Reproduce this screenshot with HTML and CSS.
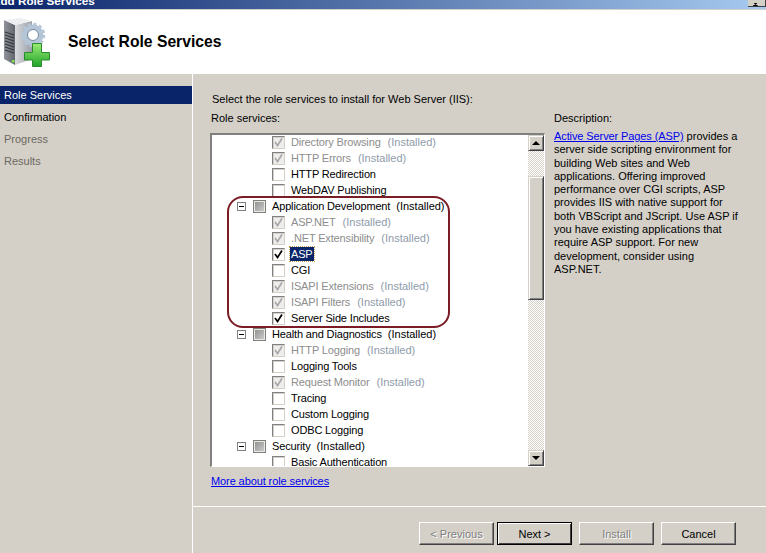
FILE: index.html
```html
<!DOCTYPE html>
<html lang="en">
<head>
<meta charset="utf-8">
<title>Add Role Services</title>
<link rel="stylesheet" href="styles.css">
</head>
<body>
<div class="titlebar">
  <span class="title-text">Add Role Services</span>
  <span class="close-btn"><svg width="11" height="9" viewBox="0 0 11 9"><path d="M1 -3L8 5M8 -3L1 5" stroke="#000" stroke-width="1.4" fill="none"/></svg></span>
</div>
<header class="banner">
  <svg class="banner-icon" width="46" height="50" viewBox="0 0 46 50">
    <defs>
      <linearGradient id="front" x1="0" y1="0" x2="1" y2="0"><stop offset="0" stop-color="#8f9399"/><stop offset="1" stop-color="#62666d"/></linearGradient>
      <linearGradient id="side" x1="0" y1="0" x2="1" y2="0"><stop offset="0" stop-color="#d9dbde"/><stop offset="1" stop-color="#9a9ea5"/></linearGradient>
      <linearGradient id="plus" x1="0" y1="0" x2="0" y2="1"><stop offset="0" stop-color="#9bec73"/><stop offset="1" stop-color="#1fa32a"/></linearGradient>
      <filter id="soft" x="-10%" y="-10%" width="120%" height="120%"><feGaussianBlur stdDeviation="0.35"/></filter>
    </defs>
    <path d="M0 3L11 8V48L0 42Z" fill="url(#front)"/>
    <path d="M11 8L28 4V42L11 48Z" fill="url(#side)"/>
    <path d="M0 3L16 1L28 4L11 8Z" fill="#eceef0"/>
    <path d="M1 15L10 18M1 18L10 21M1 21L10 24M1 24L10 27M1 27L10 30M1 30L10 33M1 33L10 36" stroke="#34373c" stroke-width="1.100"/>
    <rect x="8" y="43" width="2.500" height="2.500" fill="#7ee04e"/>
    <g filter="url(#soft)">
      <circle cx="29" cy="18" r="8" fill="none" stroke="#b4c5d8" stroke-width="5"/>
      <circle cx="29" cy="18" r="11" fill="none" stroke="#b4c5d8" stroke-width="2.500" stroke-dasharray="3.200 2.560"/>
      <circle cx="29" cy="18" r="5.500" fill="#fff" stroke="#74879c" stroke-width="1"/>
    </g>
    <path d="M28.500 26.500H37.500V35.500H45.500V43H37.500V49.500H28.500V43H20.500V35.500H28.500Z" fill="url(#plus)" stroke="#2b8a2f" stroke-width="1"/>
  </svg>
  <h1 class="banner-title">Select Role Services</h1>
</header>
<div class="content">
  <nav class="sidebar">
    <div class="step step-active">Role Services</div>
    <div class="step">Confirmation</div>
    <div class="step step-muted">Progress</div>
    <div class="step step-muted">Results</div>
  </nav>
  <main class="main">
    <div class="pane">
      <p class="intro">Select the role services to install for Web Server (IIS):</p>
      <div class="columns">
        <section class="services">
          <div class="services-label">Role services:</div>
          <div class="listbox">
            <div class="rows">
              <div class="row child off"><span class="cb cb-dis"><svg class="tick"><use href="#tk"/></svg></span><span class="name">Directory Browsing</span><span class="inst">(Installed)</span></div>
              <div class="row child off"><span class="cb cb-dis"><svg class="tick"><use href="#tk"/></svg></span><span class="name">HTTP Errors</span><span class="inst">(Installed)</span></div>
              <div class="row child"><span class="cb"></span><span class="name">HTTP Redirection</span></div>
              <div class="row child"><span class="cb"></span><span class="name">WebDAV Publishing</span></div>
              <div class="row parent"><span class="exp"></span><span class="cb cb-mixed"></span><span class="name">Application Development</span><span class="inst">(Installed)</span></div>
              <div class="row child off"><span class="cb cb-dis"><svg class="tick"><use href="#tk"/></svg></span><span class="name">ASP.NET</span><span class="inst">(Installed)</span></div>
              <div class="row child off"><span class="cb cb-dis"><svg class="tick"><use href="#tk"/></svg></span><span class="name">.NET Extensibility</span><span class="inst">(Installed)</span></div>
              <div class="row child"><span class="cb"><svg class="tick tick-on"><use href="#tk"/></svg></span><span class="name selected">ASP</span></div>
              <div class="row child"><span class="cb"></span><span class="name">CGI</span></div>
              <div class="row child off"><span class="cb cb-dis"><svg class="tick"><use href="#tk"/></svg></span><span class="name">ISAPI Extensions</span><span class="inst">(Installed)</span></div>
              <div class="row child off"><span class="cb cb-dis"><svg class="tick"><use href="#tk"/></svg></span><span class="name">ISAPI Filters</span><span class="inst">(Installed)</span></div>
              <div class="row child"><span class="cb"><svg class="tick tick-on"><use href="#tk"/></svg></span><span class="name">Server Side Includes</span></div>
              <div class="row parent"><span class="exp"></span><span class="cb cb-mixed"></span><span class="name">Health and Diagnostics</span><span class="inst">(Installed)</span></div>
              <div class="row child off"><span class="cb cb-dis"><svg class="tick"><use href="#tk"/></svg></span><span class="name">HTTP Logging</span><span class="inst">(Installed)</span></div>
              <div class="row child"><span class="cb"></span><span class="name">Logging Tools</span></div>
              <div class="row child off"><span class="cb cb-dis"><svg class="tick"><use href="#tk"/></svg></span><span class="name">Request Monitor</span><span class="inst">(Installed)</span></div>
              <div class="row child"><span class="cb"></span><span class="name">Tracing</span></div>
              <div class="row child"><span class="cb"></span><span class="name">Custom Logging</span></div>
              <div class="row child"><span class="cb"></span><span class="name">ODBC Logging</span></div>
              <div class="row parent"><span class="exp"></span><span class="cb cb-mixed"></span><span class="name">Security</span><span class="inst">(Installed)</span></div>
              <div class="row child"><span class="cb"></span><span class="name">Basic Authentication</span></div>
            </div>
            <div class="scrollbar">
              <span class="sb-btn"><i class="arrow-up"></i></span>
              <span class="sb-gap sb-gap-top"></span>
              <span class="sb-thumb"></span>
              <span class="sb-gap sb-gap-bottom"></span>
              <span class="sb-btn"><i class="arrow-down"></i></span>
            </div>
            <div class="callout"></div>
          </div>
          <a class="link more" href="#">More about role services</a>
        </section>
        <aside class="description">
          <div class="desc-label">Description:</div>
          <p class="desc-text"><a class="link tight" href="#">Active Server Pages (ASP)</a> provides a<br>server side scripting environment for<br>building Web sites and Web<br>applications. Offering improved<br>performance over CGI scripts, ASP<br>provides IIS with native support for<br>both VBScript and JScript. Use ASP if<br>you have existing applications that<br>require ASP support. For new<br>development, consider using<br>ASP.NET.</p>
        </aside>
      </div>
    </div>
    <footer class="footer">
      <button class="btn btn-dis" type="button">&lt; Previous</button>
      <button class="btn btn-default" type="button">Next &gt;</button>
      <button class="btn btn-dis btn-gap" type="button">Install</button>
      <button class="btn btn-gap" type="button">Cancel</button>
    </footer>
  </main>
</div>
<svg class="defs" width="0" height="0"><symbol id="tk" viewBox="0 0 11 11"><path d="M2 5L4.500 8.500L9 1.500" fill="none" stroke="currentColor" stroke-width="1.7"/></symbol></svg>
</body>
</html>
```
FILE: styles.css
```css
* { box-sizing: border-box; }
html, body { margin: 0; height: 100%; overflow: hidden; }
body {
  width: 766px; height: 553px; background: #d4d0c8; color: #000;
  font: 11px/16px "Liberation Sans", Arial, sans-serif;
  display: flex; flex-direction: column;
}
p, h1 { margin: 0; }

.titlebar {
  height: 10px; flex: none; overflow: hidden; display: flex; justify-content: space-between;
  background: linear-gradient(90deg, #0a246a, #a6caf0);
  border-bottom: 1px solid #d4d0c8;
}
.title-text { font-weight: 700; color: #fff; margin: -7px 0 0 -8px; font-size: 11.700px; line-height: 16px; white-space: nowrap; }
.close-btn {
  width: 18px; height: 7px; background: #d4d0c8;
  border-right: 1px solid #404040; border-bottom: 1px solid #404040; display: block; overflow: hidden; padding-left: 3px;
}
.banner {
  height: 64px; flex: none; background: #fff; display: flex; align-items: center; padding: 0 0 0 4px; gap: 18px;
}
.banner-icon { flex: none; }
.banner-title { font: 700 15.700px/20px "Liberation Sans", Arial, sans-serif; margin-top: -1px; }

.content { flex: 1; display: flex; min-height: 0; }
.sidebar { width: 192px; flex: none; padding-top: 12px; }
.step { height: 22px; line-height: 22px; padding-left: 4px; }
.step-active { height: 18px; line-height: 18px; background: #0a246a; color: #fff; margin-bottom: 2px; }
.step-muted { color: #6b6960; }

.main { flex: 1; border-left: 1px solid #fff; display: flex; flex-direction: column; min-width: 0; }
.pane { flex: 1; padding: 17px 0 0 17px; }
.intro { margin: 0 0 3px 2px; height: 16px; }
.columns { display: flex; gap: 9px; }
.services { width: 335px; flex: none; }
.services-label { height: 16px; padding-left: 1px; margin-bottom: 7px; }
.listbox {
  position: relative; height: 334px; display: flex; overflow: hidden; background: #fff;
  border-style: solid; border-width: 2px 1px 1px 2px; border-color: #808080 #fff #fff #808080;
}
.rows { flex: 1; overflow: hidden; margin-top: -1px; }
.row { height: 16px; display: flex; align-items: center; white-space: nowrap; }
.child { padding-left: 60px; }
.parent { padding-left: 25px; }
.name { letter-spacing: -0.15px; }
.off { color: #8d8d8d; }
.inst { margin-left: 7px; }
.parent .inst { margin-left: 6px; }
.off .inst { color: #8f9bab; }

.cb {
  width: 13px; height: 13px; flex: none; margin-right: 6px; position: relative; background: #fff;
  border-style: solid; border-width: 1px; border-color: #808080 #d4d0c8 #d4d0c8 #808080;
  box-shadow: inset 1px 1px 0 #d4d0c8; color: #000;
}
.cb-dis { background: #ededed; color: #a8a8a8; }
.cb-mixed { background: linear-gradient(135deg, #8c8c8c, #d0d0d0); border: 1px solid #808080; box-shadow: inset 0 0 0 1px #ece9e2; }
.tick { position: absolute; left: 0; top: 0; width: 11px; height: 11px; display: block; }
.defs { position: absolute; }
.exp {
  width: 9px; height: 9px; flex: none; margin-right: 7px; border: 1px solid #808080; background: #fff; position: relative;
}
.exp::after { content: ""; position: absolute; left: 1px; top: 3px; width: 5px; height: 1px; background: #000; }
.selected { background: #0a246a; color: #fff; outline: 1px dotted #c9a552; padding: 0 1px; margin-left: -1px; line-height: 14px; }

.scrollbar { width: 16px; flex: none; display: flex; flex-direction: column; }
.sb-btn {
  height: 16px; flex: none; background: #d4d0c8; display: flex; align-items: center; justify-content: center;
  border-style: solid; border-width: 1px; border-color: #d4d0c8 #404040 #404040 #d4d0c8;
  box-shadow: inset 1px 1px 0 #fff, inset -1px -1px 0 #808080;
}
.arrow-up, .arrow-down { width: 0; height: 0; border-left: 4px solid transparent; border-right: 4px solid transparent; }
.arrow-up { border-bottom: 4px solid #000; }
.arrow-down { border-top: 4px solid #000; }
.sb-gap { background: repeating-conic-gradient(#fff 0 25%, #d4d0c8 0 50%) 0 0 / 2px 2px; }
.sb-gap-top { height: 25px; flex: none; }
.sb-gap-bottom { flex: 1; }
.sb-thumb {
  height: 124px; flex: none; background: #d4d0c8;
  border-style: solid; border-width: 1px; border-color: #d4d0c8 #404040 #404040 #d4d0c8;
  box-shadow: inset 1px 1px 0 #fff, inset -1px -1px 0 #808080;
}
.callout {
  position: absolute; left: 15px; top: 61px; width: 223px; height: 132px;
  border: 2px solid #7b1c24; border-radius: 16px;
}
.link { color: #0000ee; text-decoration: underline; }
.tight { letter-spacing: -0.1px; }
.more { display: block; margin: 6px 0 0 1px; letter-spacing: -0.1px; }
.description { flex: 1; }
.desc-label { height: 16px; margin-bottom: 4px; }
.desc-text { line-height: 13.300px; white-space: nowrap; }

.footer {
  height: 47px; flex: none; border-top: 1px solid #fff; display: flex; align-items: flex-start; padding: 15px 0 0 226px;
}
.btn {
  width: 75px; height: 23px; margin: 0 3px 0 0; padding: 0; background: #d4d0c8; color: #000; font: inherit; line-height: 16px;
  border-style: solid; border-width: 1px; border-color: #fff #404040 #404040 #fff;
  box-shadow: inset -1px -1px 0 #808080;
}
.btn-default { border: 1px solid #000; box-shadow: inset 1px 1px 0 #fff, inset -1px -1px 0 #404040; }
.btn-dis { color: #808080; text-shadow: 1px 1px 0 #fff; }
.btn-gap { margin-left: 4px; margin-right: 3px; }
```
